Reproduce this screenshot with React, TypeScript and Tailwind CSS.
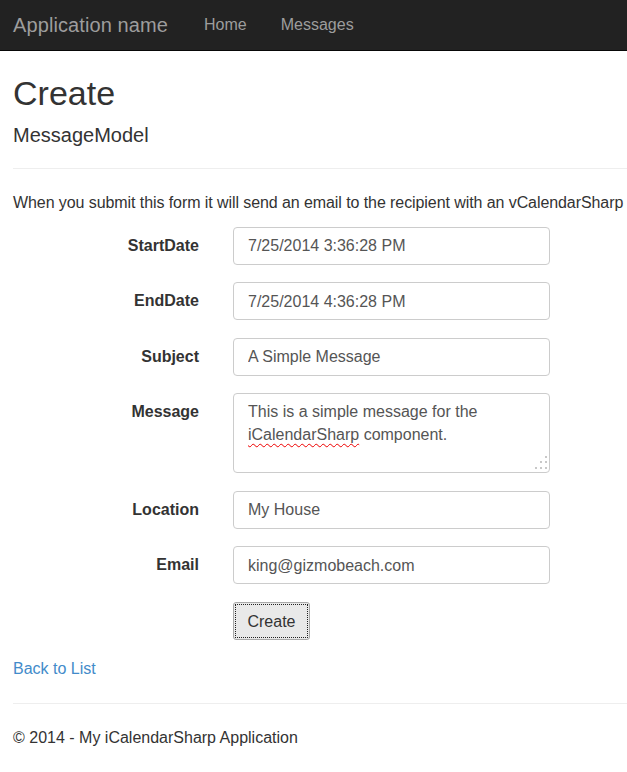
const fields = [
  { label: "StartDate", value: "7/25/2014 3:36:28 PM" },
  { label: "EndDate", value: "7/25/2014 4:36:28 PM" },
  { label: "Subject", value: "A Simple Message" },
];

const fields2 = [
  { label: "Location", value: "My House" },
  { label: "Email", value: "king@gizmobeach.com" },
];

function Row({ label, children }: { label: string; children: React.ReactNode }) {
  return (
    <div className="mb-[17.5px] flex items-start">
      <label className="w-[186px] shrink-0 pt-[8px] text-right font-bold text-[#333]">{label}</label>
      <div className="ml-[34px] w-[317px]">{children}</div>
    </div>
  );
}

function TextInput({ value }: { value: string }) {
  return (
    <input
      readOnly
      defaultValue={value}
      className="block h-[38px] w-full rounded-[4px] border border-[#ccc] bg-white px-[14px] pt-[1px] text-[16px] text-[#555] outline-none"
    />
  );
}

export default function App() {
  return (
    <div className="min-h-screen overflow-hidden bg-white font-['Liberation_Sans',Arial,sans-serif] text-[16px] leading-[1.428] text-[#333]">
      <nav className="flex h-[51px] items-center border-b border-[#080808] bg-[#222]">
        <a href="#" className="pl-[13px] pr-[19px] text-[20px] tracking-[0.1px] text-[#9d9d9d]">
          Application name
        </a>
        <ul className="flex">
          <li>
            <a href="#" className="px-[17px] text-[#9d9d9d]">Home</a>
          </li>
          <li>
            <a href="#" className="px-[17px] text-[#9d9d9d]">Messages</a>
          </li>
        </ul>
      </nav>

      <div className="pl-[13px]">
        <h2 className="mt-[24px] text-[34px] leading-[1.1] font-normal">Create</h2>
        <h4 className="mt-[12px] text-[20px] leading-[1.1] font-normal">MessageModel</h4>
        <hr className="mt-[21.5px] border-t border-[#eee]" />
        <p className="mt-[23.5px] whitespace-nowrap tracking-[-0.08px]">
          When you submit this form it will send an email to the recipient with an vCalendarSharp
        </p>

        <form className="mt-[11.5px]">
          {fields.map((f) => (
            <Row key={f.label} label={f.label}>
              <TextInput value={f.value} />
            </Row>
          ))}
          <Row label="Message">
            <div className="relative h-[80px] w-full rounded-[4px] border border-[#ccc] bg-white px-[14px] pt-[7px] text-[#555]">
              This is a simple message for the{" "}
              <span className="underline decoration-[#e00] decoration-wavy decoration-1 underline-offset-[3px]">
                iCalendarSharp
              </span>{" "}
              component.
              <svg className="absolute right-[1px] bottom-[2px]" width="14" height="14" viewBox="0 0 14 14">
                <rect x="11" y="0" width="2" height="2" fill="#c8c8c8" />
                <rect x="6" y="5" width="2" height="2" fill="#c8c8c8" />
                <rect x="11" y="5" width="2" height="2" fill="#c8c8c8" />
                <rect x="1" y="11" width="2" height="2" fill="#c8c8c8" />
                <rect x="6" y="11" width="2" height="2" fill="#c8c8c8" />
                <rect x="11" y="11" width="2" height="2" fill="#c8c8c8" />
              </svg>
            </div>
          </Row>
          {fields2.map((f) => (
            <Row key={f.label} label={f.label}>
              <TextInput value={f.value} />
            </Row>
          ))}
          <div className="ml-[220px]">
            <button
              type="button"
              className="block h-[38px] w-[77px] rounded-[3px] border border-[#a9a9a9] bg-[#e9e9e9] p-[1px] text-[16px] text-[#333]"
            >
              <span className="flex h-full w-full items-center justify-center border border-dotted border-[#222] pt-[3px]">
                Create
              </span>
            </button>
          </div>
        </form>

        <div className="mt-[18.5px]">
          <a href="#" className="text-[#428bca]">Back to List</a>
        </div>

        <hr className="mt-[21.5px] border-t border-[#eee]" />
        <footer className="mt-[23.5px]">
          <p>© 2014 - My iCalendarSharp Application</p>
        </footer>
      </div>
    </div>
  );
}
